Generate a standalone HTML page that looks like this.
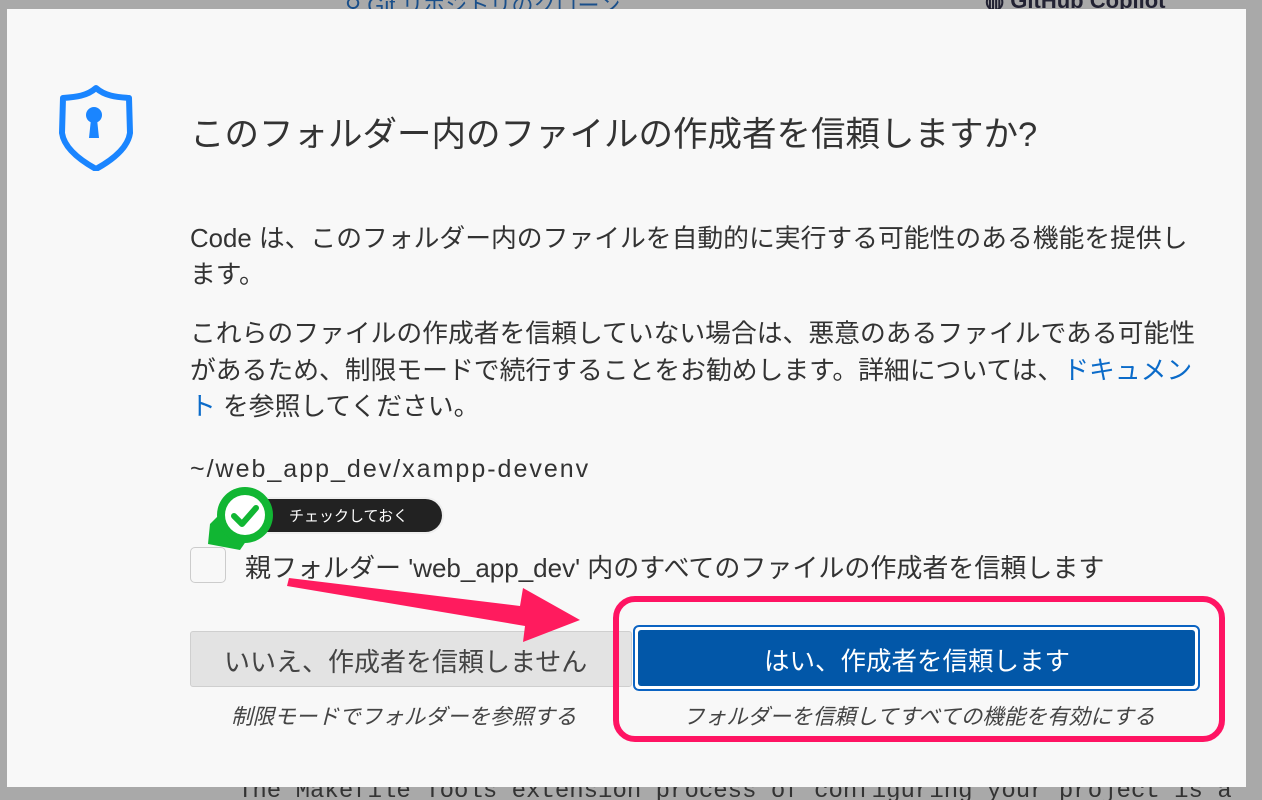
<!DOCTYPE html>
<html><head><meta charset="utf-8"><style>
body{margin:0;width:1262px;height:800px;background:#a9a9a9;position:relative;overflow:hidden;font-family:"Liberation Sans","Noto Sans CJK JP",sans-serif;}
.dlg{position:absolute;left:7px;top:9px;width:1239px;height:778px;background:#f8f8f8;}
.t{position:absolute;color:#333;white-space:nowrap}
.bg-top{position:absolute;top:0;font-size:22px;color:#223;}
</style></head><body>
<div class="bg-top" style="left:345px;top:-12px;color:#1a4f8a">⚲ Git リポジトリのクローン</div>
<div class="bg-top" style="left:985px;top:-12px;font-weight:bold">◍ GitHub Copilot</div>
<div style="position:absolute;left:0;top:787px;width:1262px;height:13px;font-family:'Liberation Mono',monospace;font-size:24px;color:#333;line-height:13px;overflow:hidden"><span style="position:relative;top:-2px;left:238px">The Makefile Tools extension process of configuring your project is a</span></div>
<div class="dlg"></div>
<svg style="position:absolute;left:54px;top:85px" width="84" height="86" viewBox="0 0 84 86"><path d="M42 3 C33 11 22 12 9 13 L8 48 C10 62 24 74 42 84 C60 74 74 62 76 48 L75 13 C62 12 51 11 42 3Z" fill="none" stroke="#1a85ff" stroke-width="6" stroke-linejoin="round"/><circle cx="40" cy="30" r="8" fill="#1a85ff"/><path d="M37 34 L35 53 L45 53 L43 34Z" fill="#1a85ff"/></svg>
<div class="t" style="left:190px;top:106px;font-size:34.5px;color:#333">このフォルダー内のファイルの作成者を信頼しますか?</div>
<div class="t" style="left:190px;top:221px;font-size:25.8px;line-height:36px">Code は、このフォルダー内のファイルを自動的に実行する可能性のある機能を提供し<br>ます。</div>
<div class="t" style="left:190px;top:316px;font-size:25.8px;line-height:36.5px">これらのファイルの作成者を信頼していない場合は、悪意のあるファイルである可能性<br>があるため、制限モードで続行することをお勧めします。詳細については、<span style="color:#0b6bc9">ドキュメン<br>ト</span> を参照してください。</div>
<div class="t" style="left:190px;top:455px;font-size:25px;letter-spacing:2px">~/web_app_dev/xampp-devenv</div>
<div style="position:absolute;left:190px;top:547px;width:34px;height:34px;border:1.5px solid #ccc;border-radius:5px;background:#f8f8f8"></div>
<div class="t" style="left:245px;top:548px;font-size:26px">親フォルダー 'web_app_dev' 内のすべてのファイルの作成者を信頼します</div>
<div style="position:absolute;left:230px;top:499px;width:212px;height:33px;background:#222;border-radius:17px;box-shadow:0 0 0 2px #eee"></div>
<div class="t" style="left:289px;top:505px;font-size:15px;color:#fff">チェックしておく</div>
<svg style="position:absolute;left:200px;top:484px" width="80" height="80" viewBox="0 0 80 80"><path d="M8 60 L10 40 L30 20 L58 40 L40 66 Z" fill="#11b633"/><circle cx="45" cy="31" r="28" fill="#11b633"/><circle cx="45" cy="31" r="20" fill="#fff"/><path d="M34 32 L42 40 L56 24" fill="none" stroke="#11b633" stroke-width="6" stroke-linecap="round" stroke-linejoin="round"/></svg>
<div style="position:absolute;left:190px;top:631px;width:440px;height:54px;background:#e3e3e3;border:1.5px solid #cfcfcf;border-radius:3px"></div>
<div class="t" style="left:224px;top:642px;font-size:26px;color:#444">いいえ、作成者を信頼しません</div>
<div class="t" style="left:231px;top:700px;font-size:21.6px;color:#444;font-style:italic">制限モードでフォルダーを参照する</div>
<svg style="position:absolute;left:285px;top:570px" width="330" height="80" viewBox="0 0 330 80"><path d="M4 8 L235 36 L238 18 L295 50 L238 72 L240 56 L2 16Z" fill="#ff1b5e"/></svg>
<div style="position:absolute;left:613px;top:596px;width:600px;height:134px;border:6px solid #ff1463;border-radius:22px"></div>
<div style="position:absolute;left:633px;top:625px;width:563px;height:62px;border:2px solid #0b63c2;border-radius:6px;background:#fff"></div>
<div style="position:absolute;left:638px;top:630px;width:557px;height:56px;background:#0257a8;border-radius:3px"></div>
<div class="t" style="left:764px;top:641px;font-size:25.5px;color:#fff">はい、作成者を信頼します</div>
<div class="t" style="left:683px;top:700px;font-size:21.6px;color:#444;font-style:italic">フォルダーを信頼してすべての機能を有効にする</div>
</body></html>
